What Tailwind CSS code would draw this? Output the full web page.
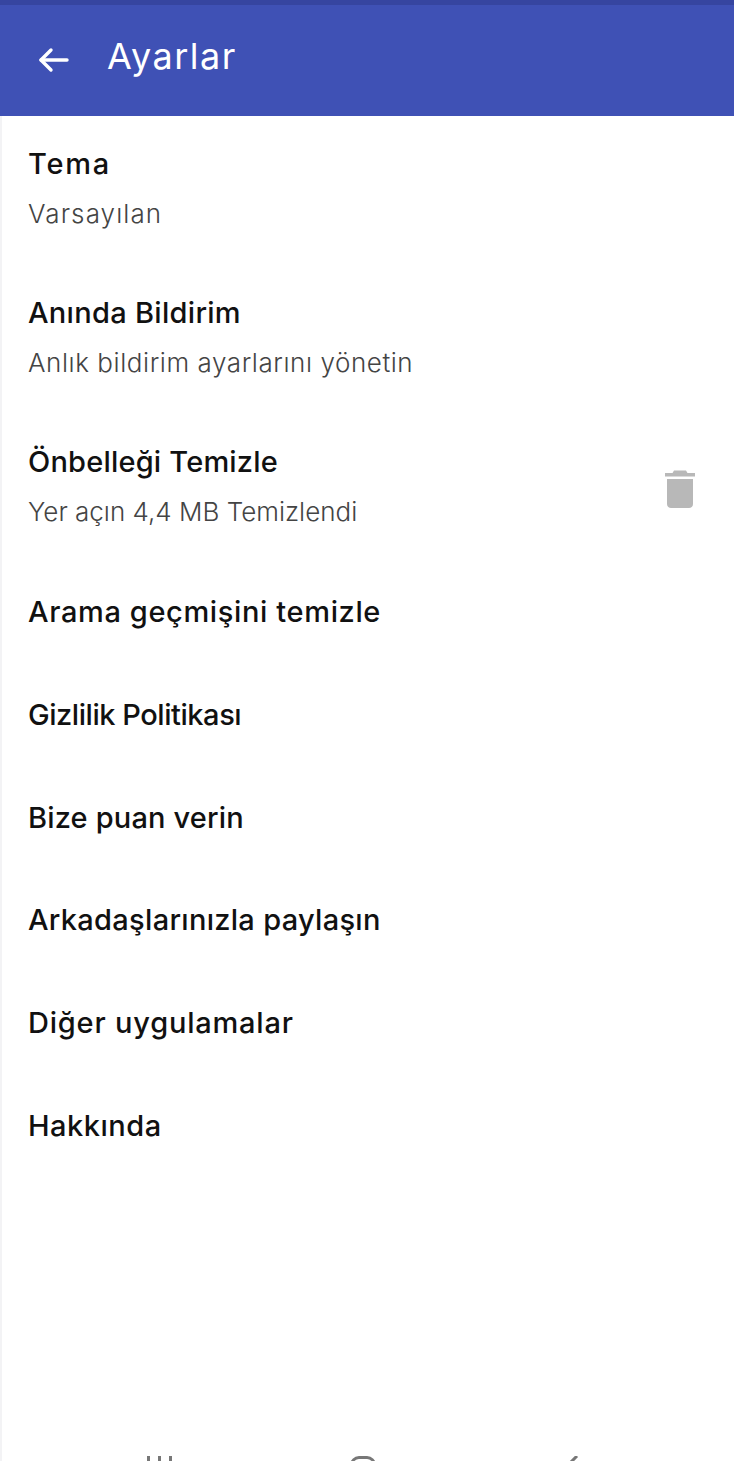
<!DOCTYPE html>
<html lang="tr">

<head>
  <meta charset="UTF-8">
  <meta name="viewport" content="width=device-width, initial-scale=1.0">
  <title>Ayarlar</title>
  <script src="https://cdn.jsdelivr.net/npm/@tailwindcss/browser@4"></script>
</head>

<body class="h-[1461px] w-[734px] overflow-hidden bg-white font-['Inter','Noto_Sans',sans-serif]">
  <div class="flex h-full flex-col border-l-2 border-[#f3f3f5]">
    <!-- Header -->
    <header class="-ml-[2px] h-[116px] shrink-0 border-t-[5px] border-[#3645a0] bg-[#3f51b5] text-white">
      <div class="flex h-full items-center pb-[9px] pl-[37px]">
        <svg class="mt-[7px] h-[32px] w-[32px]" viewBox="0 0 32 32" fill="none" stroke="#fff" stroke-width="3.4" stroke-linecap="round" stroke-linejoin="round">
          <path d="M4 16H30" />
          <path d="M14 6L4 16L14 26" />
        </svg>
        <h1 class="ml-[38px] text-[36px] leading-none font-normal tracking-[1.5px]">Ayarlar</h1>
      </div>
    </header>

    <!-- Settings list -->
    <main class="flex-1 text-[#111]">
      <div class="h-[149px] pt-[33px] pl-[26px]">
        <p class="text-[29px] leading-[30px] font-medium tracking-[1.75px]">Tema</p>
        <p class="mt-[20px] text-[26px] leading-[30px] font-light tracking-[1.1px] text-[#444]">Varsayılan</p>
      </div>
      <div class="h-[149px] pt-[33px] pl-[26px]">
        <p class="text-[29px] leading-[30px] font-medium tracking-[0.3px]">Anında Bildirim</p>
        <p class="mt-[20px] text-[26px] leading-[30px] font-light tracking-[0.56px] text-[#444]">Anlık bildirim ayarlarını yönetin</p>
      </div>
      <div class="flex h-[149px] pt-[33px] pr-[38px] pl-[26px]">
        <div class="flex-1">
          <p class="text-[29px] leading-[30px] font-medium tracking-[0.2px]">Önbelleği Temizle</p>
          <p class="mt-[20px] text-[26px] leading-[30px] font-light tracking-[0px] text-[#444]">Yer açın 4,4 MB Temizlendi</p>
        </div>
        <svg class="mt-[22px] h-[40px] w-[32px]" viewBox="0 0 32 40" fill="#b8b8b8">
          <path d="M10 1.5H22L23.5 4H31V7.5H1V4H8.5Z" />
          <path d="M3 10H29V35C29 37.5 27 39 25 39H7C5 39 3 37.5 3 35Z" />
        </svg>
      </div>
      <div class="h-[102.8px] pt-[34px] pl-[26px]">
        <p class="text-[29px] leading-[30px] font-medium tracking-[0.63px]">Arama geçmişini temizle</p>
      </div>
      <div class="h-[102.8px] pt-[34px] pl-[26px]">
        <p class="text-[29px] leading-[30px] font-medium tracking-[-0.45px]">Gizlilik Politikası</p>
      </div>
      <div class="h-[102.8px] pt-[34px] pl-[26px]">
        <p class="text-[29px] leading-[30px] font-medium tracking-[0.17px]">Bize puan verin</p>
      </div>
      <div class="h-[102.8px] pt-[34px] pl-[26px]">
        <p class="text-[29px] leading-[30px] font-medium tracking-[0.3px]">Arkadaşlarınızla paylaşın</p>
      </div>
      <div class="h-[102.8px] pt-[34px] pl-[26px]">
        <p class="text-[29px] leading-[30px] font-medium tracking-[0.8px]">Diğer uygulamalar</p>
      </div>
      <div class="h-[102.8px] pt-[34px] pl-[26px]">
        <p class="text-[29px] leading-[30px] font-medium tracking-[0.5px]">Hakkında</p>
      </div>
    </main>

    <!-- Android nav bar, cut off by the bottom edge -->
    <nav class="flex h-[5px] shrink-0 items-start overflow-hidden">
      <div class="ml-[145px] flex gap-[8px]">
        <span class="h-[20px] w-[3px] bg-[#777]"></span>
        <span class="h-[20px] w-[3px] bg-[#777]"></span>
        <span class="h-[20px] w-[3px] bg-[#777]"></span>
      </div>
      <span class="ml-[178px] h-[26px] w-[26px] rounded-[9px] border-[3px] border-[#777]"></span>
      <svg class="ml-[189px] h-[20px] w-[14px]" viewBox="0 0 14 20" fill="none" stroke="#777" stroke-width="3">
        <path d="M12 0L3 9" />
      </svg>
    </nav>
  </div>
</body>

</html>
